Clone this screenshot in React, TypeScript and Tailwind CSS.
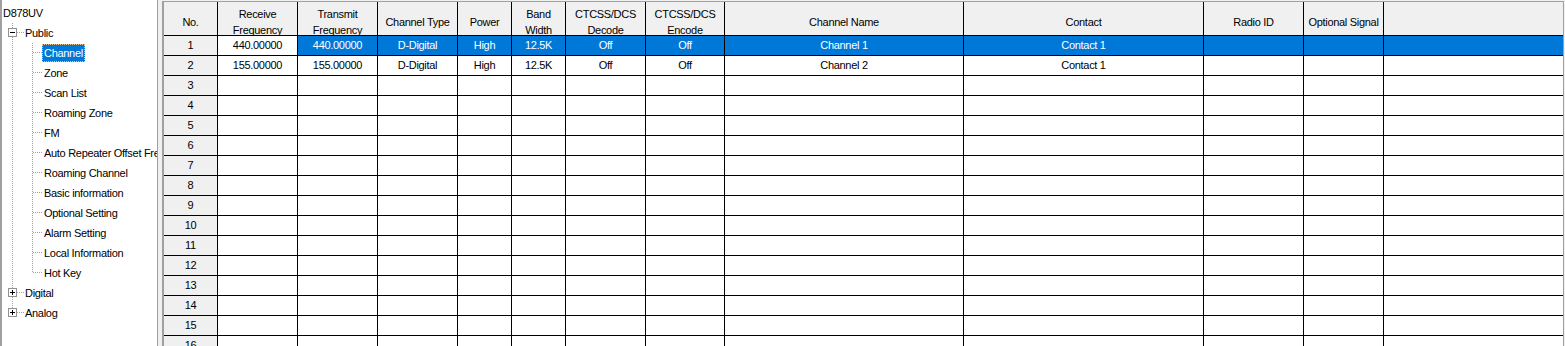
import React from "react"

const font = "font-['Liberation_Sans',Arial,sans-serif] text-[11px] tracking-[-0.3px]"

const columns = [
  { lines: ["No."], w: "w-[54px]" },
  { lines: ["Receive", "Frequency"], w: "w-[80px]" },
  { lines: ["Transmit", "Frequency"], w: "w-[80px]" },
  { lines: ["Channel Type"], w: "w-[80px]" },
  { lines: ["Power"], w: "w-[54px]" },
  { lines: ["Band", "Width"], w: "w-[54px]" },
  { lines: ["CTCSS/DCS", "Decode"], w: "w-[80px]" },
  { lines: ["CTCSS/DCS", "Encode"], w: "w-[79px]" },
  { lines: ["Channel Name"], w: "w-[239px]" },
  { lines: ["Contact"], w: "w-[240px]" },
  { lines: ["Radio ID"], w: "w-[100px]" },
  { lines: ["Optional Signal"], w: "w-[80px]" },
]

const data: string[][] = [
  ["440.00000", "440.00000", "D-Digital", "High", "12.5K", "Off", "Off", "Channel 1", "Contact 1", "", ""],
  ["155.00000", "155.00000", "D-Digital", "High", "12.5K", "Off", "Off", "Channel 2", "Contact 1", "", ""],
]

const children = [
  "Channel",
  "Zone",
  "Scan List",
  "Roaming Zone",
  "FM",
  "Auto Repeater Offset Frequency",
  "Roaming Channel",
  "Basic information",
  "Optional Setting",
  "Alarm Setting",
  "Local Information",
  "Hot Key",
]

const dot = { stroke: "#a0a0a0", strokeDasharray: "1 1", shapeRendering: "crispEdges" as const }

function ExpandBox({ open }: { open: boolean }) {
  return (
    <g shapeRendering="crispEdges">
      <rect x={6.5} y={5.5} width={8} height={8} fill="#fff" stroke="#919191" />
      <line x1={8} y1={9.5} x2={13} y2={9.5} stroke="#000" />
      {!open && <line x1={10.5} y1={7} x2={10.5} y2={12} stroke="#000" />}
    </g>
  )
}

function ParentRow({ label, open, last }: { label: string; open: boolean; last?: boolean }) {
  return (
    <div className="flex h-[20px] items-center">
      <svg width={23} height={20} className="shrink-0">
        <line x1={10.5} y1={0} x2={10.5} y2={5} {...dot} />
        {!last && <line x1={10.5} y1={14} x2={10.5} y2={20} {...dot} />}
        <line x1={15} y1={9.5} x2={22} y2={9.5} {...dot} />
        <ExpandBox open={open} />
      </svg>
      <span className="whitespace-nowrap">{label}</span>
    </div>
  )
}

function ChildRow({ label, last, selected }: { label: string; last?: boolean; selected?: boolean }) {
  return (
    <div className="flex h-[20px] items-center">
      <svg width={40} height={20} className="shrink-0">
        <line x1={10.5} y1={0} x2={10.5} y2={20} {...dot} />
        <line x1={30.5} y1={0} x2={30.5} y2={last ? 10 : 20} {...dot} />
        <line x1={31} y1={9.5} x2={40} y2={9.5} {...dot} />
      </svg>
      <span
        className={
          selected
            ? "whitespace-nowrap h-[18px] flex items-center px-[1px] bg-[#0078d7] text-white border border-dotted border-[#e8c890]"
            : "whitespace-nowrap px-[2px]"
        }
      >
        {label}
      </span>
    </div>
  )
}

function Tree() {
  return (
    <div className={`w-[158px] shrink-0 h-full bg-white border-l-2 border-r border-[#a0a0a0] overflow-hidden pt-[3px] text-black ${font} tracking-[-0.1px]`}>
      <div className="h-[20px] flex items-center pl-[1px]">D878UV</div>
      <ParentRow label="Public" open />
      {children.map((c, i) => (
        <ChildRow key={c} label={c} selected={i === 0} last={i === children.length - 1} />
      ))}
      <ParentRow label="Digital" open={false} />
      <ParentRow label="Analog" open={false} last />
    </div>
  )
}

function HeaderRow() {
  return (
    <div className="flex h-[34px] border-b border-black bg-[#f0f0f0] shrink-0">
      {columns.map((col, i) => (
        <div
          key={i}
          className={`${col.w} shrink-0 border-r border-black overflow-hidden flex flex-col justify-center items-center pt-[6px] leading-[16px] text-center`}
        >
          {col.lines.map((l) => (
            <div key={l} className="whitespace-nowrap">
              {l}
            </div>
          ))}
        </div>
      ))}
      <div className="flex-1" />
    </div>
  )
}

function DataRow({ index, values }: { index: number; values: string[] }) {
  const selected = index === 1
  return (
    <div className="flex h-[20px] border-b border-black shrink-0">
      {columns.map((col, i) => {
        let tone = "bg-white text-black"
        if (i === 0) tone = "bg-[#f0f0f0] text-black"
        else if (selected && i > 1) tone = "bg-[#0078d7] text-white"
        return (
          <div
            key={i}
            className={`${col.w} ${tone} shrink-0 border-r border-black flex items-center justify-center whitespace-nowrap overflow-hidden`}
          >
            {i === 0 ? index : values[i - 1] ?? ""}
          </div>
        )
      })}
      <div className={selected ? "flex-1 bg-[#0078d7]" : "flex-1 bg-white"} />
    </div>
  )
}

export default function App() {
  const rows = Array.from({ length: 16 }, (_, i) => i + 1)
  return (
    <div className={`w-[1565px] h-[346px] overflow-hidden bg-[#f0f0f0] flex gap-[4px] ${font}`}>
      <Tree />
      <div className="flex-1 mt-px mr-px flex flex-col border-l-2 border-t border-r border-[#a0a0a0] bg-white text-black overflow-hidden">
        <HeaderRow />
        {rows.map((n) => (
          <DataRow key={n} index={n} values={data[n - 1] ?? []} />
        ))}
      </div>
    </div>
  )
}
